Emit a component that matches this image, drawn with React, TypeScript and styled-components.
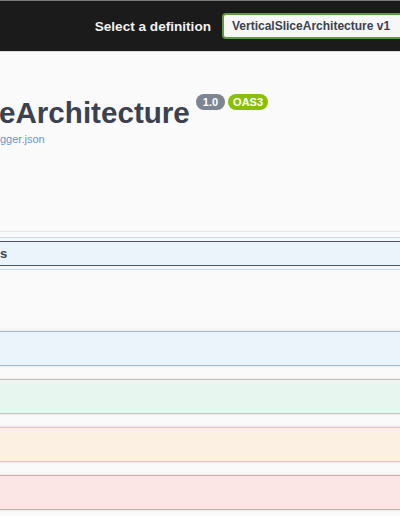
import React from 'react';
import styled, { createGlobalStyle } from 'styled-components';

const GlobalStyle = createGlobalStyle`
  html, body {
    margin: 0;
    padding: 0;
    background: #fafafa;
    font-family: "Liberation Sans", Arial, sans-serif;
    overflow: hidden;
  }
`;

type Method = 'get' | 'post' | 'put' | 'delete';

const METHOD_COLORS: Record<Method, { bg: string; border: string }> = {
  get: { bg: '#ebf3fb', border: '#a3bacd' },
  post: { bg: '#e7f6ee', border: '#a3d3bb' },
  put: { bg: '#fcf0e2', border: '#e6c9a1' },
  delete: { bg: '#fbe5e5', border: '#d6a7a8' },
};

const App = () => {
  return (
    <>
      <GlobalStyle />
      <Page>
        <TopBar>
          <SelectLabel>Select a definition</SelectLabel>
          <DefinitionSelect>VerticalSliceArchitecture v1</DefinitionSelect>
        </TopBar>

        <Info>
          <TitleRow>
            <Title>eArchitecture</Title>
            <Badge $color="#7d8492">1.0</Badge>
            <Badge $color="#89bf04">OAS3</Badge>
          </TitleRow>
          <SpecLink>gger.json</SpecLink>
        </Info>

        <Divider />

        <TagHeader>
          <TagName>s</TagName>
        </TagHeader>

        <Operations>
          <OpBlock $method="get" />
          <OpBlock $method="post" />
          <OpBlock $method="put" />
          <OpBlock $method="delete" />
        </Operations>
      </Page>
    </>
  );
};

const Page = styled.div`
  width: 400px;
  min-height: 516px;
  overflow: hidden;
`;

const TopBar = styled.div`
  height: 50px;
  display: flex;
  align-items: center;
  justify-content: flex-end;
  gap: 11px;
  background: #1b1b1b;
  border-top: 1px solid #7c7c7c;
  border-bottom: 1px solid #d8d8d8;
  overflow: hidden;
`;

const SelectLabel = styled.span`
  color: #f2f2f2;
  font-size: 13.6px;
  font-weight: 700;
`;

const DefinitionSelect = styled.div`
  width: 188px;
  height: 22px;
  margin-right: -22px;
  padding: 0 0 0 8px;
  display: flex;
  align-items: center;
  background: #f7f7f7;
  border: 2px solid #5f9a3e;
  border-radius: 4px;
  color: #3b4151;
  font-size: 12px;
  font-weight: 700;
  white-space: nowrap;
`;

const Info = styled.div`
  padding: 43px 0 0;
  height: 136px;
`;

const TitleRow = styled.div`
  display: flex;
  align-items: flex-start;
`;

const Title = styled.h2`
  margin: 0 0 0 -1px;
  font-size: 29.6px;
  line-height: 36px;
  font-weight: 700;
  color: #3b4151;
`;

const Badge = styled.span<{ $color: string }>`
  margin: -1px 0 0 6px;
  height: 16px;
  padding: 0 7px;
  display: inline-flex;
  align-items: center;
  border-radius: 8px;
  background: ${(p) => p.$color};
  color: #fff;
  font-size: 11px;
  font-weight: 700;
  & + & {
    margin-left: 3px;
    padding: 0 5px;
  }
`;

const SpecLink = styled.a`
  display: block;
  margin-top: 1px;
  font-size: 11px;
  line-height: 14px;
  color: #6897cf;
`;

const Divider = styled.div`
  height: 1px;
  background: #ebe4e5;
`;

const TagHeader = styled.div`
  margin: 9px -10px 0;
  height: 23px;
  padding-left: 10px;
  display: flex;
  align-items: center;
  background: #ebf3fb;
  border-top: 1px solid #50575f;
  border-bottom: 1px solid #50575f;
  box-shadow: 0 0 0 3px #f3f7fa, 0 0 0 4px #cadde8;
`;

const TagName = styled.span`
  font-size: 13px;
  font-weight: 700;
  color: #3b4151;
`;

const Operations = styled.div`
  margin: 65px -10px 0;
  display: flex;
  flex-direction: column;
  gap: 13px;
`;

const OpBlock = styled.div<{ $method: Method }>`
  height: 33px;
  background: ${(p) => METHOD_COLORS[p.$method].bg};
  border: 1px solid ${(p) => METHOD_COLORS[p.$method].border};
  border-radius: 4px;
  box-shadow: 0 0 3px rgba(0, 0, 0, 0.12);
`;

export default App;
